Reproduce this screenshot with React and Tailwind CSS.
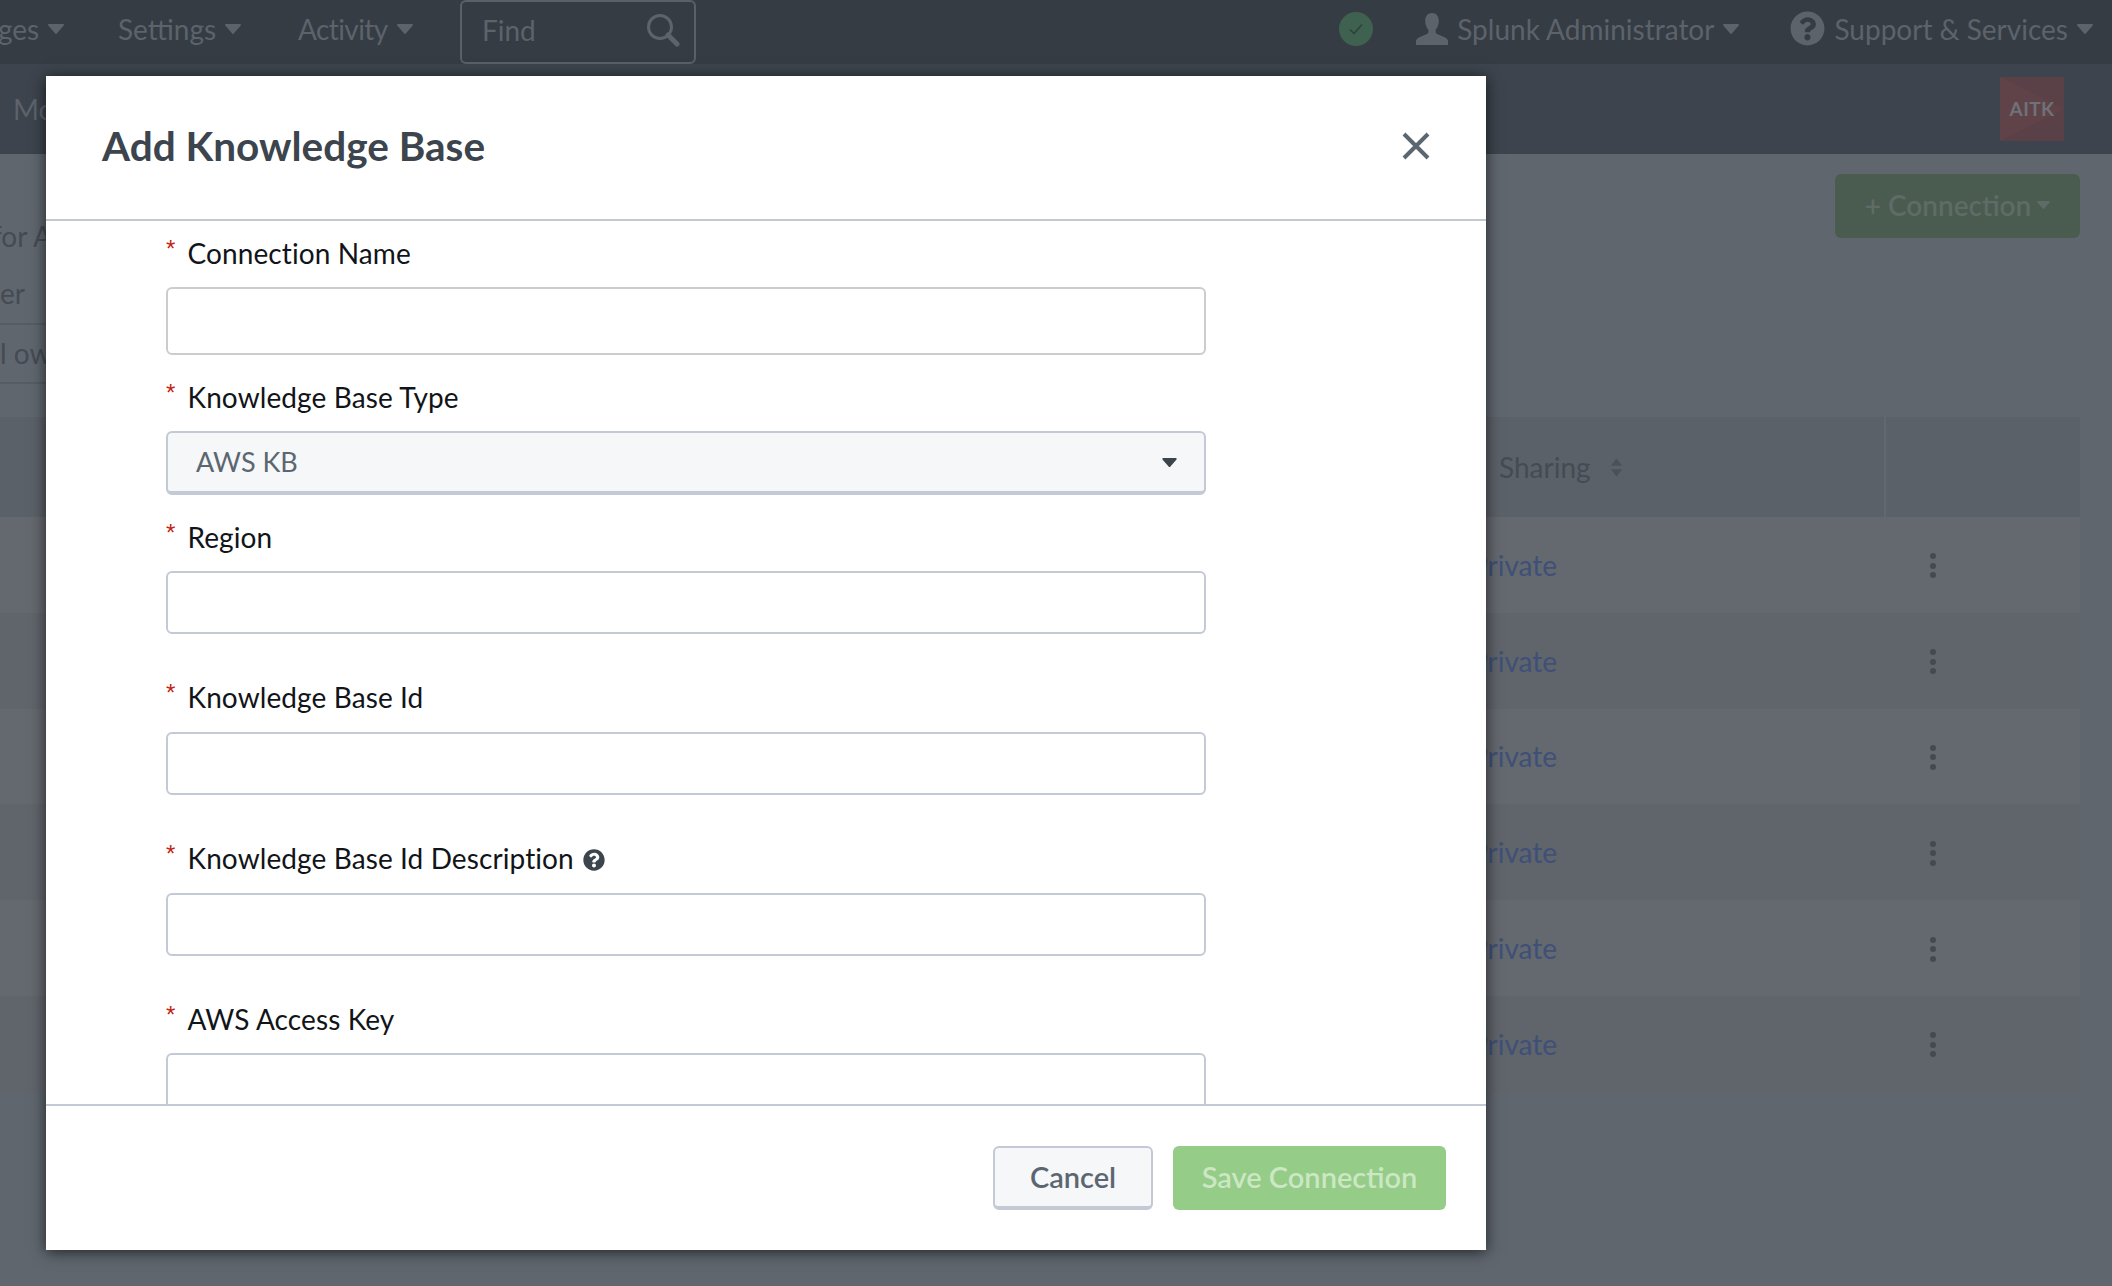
import { FaQuestionCircle } from 'react-icons/fa'

const rows = [0, 1, 2, 3, 4, 5]

function Caret({ className }) {
  return (
    <svg viewBox="0 0 16 10" className={className} fill="currentColor">
      <path d="M1 0h14a1 1 0 0 1 .8 1.6l-7 8a1 1 0 0 1-1.6 0l-7-8A1 1 0 0 1 1 0z" />
    </svg>
  )
}

function NavItem({ label, className }) {
  return (
    <div className={`flex items-center gap-[9px] ${className}`}>
      <span>{label}</span>
      <Caret className="w-[16px] h-[10px] text-[#5c636b]" />
    </div>
  )
}

function Field({ label, className, children, help }) {
  return (
    <div className={className}>
      <div className="flex items-center h-[40px] text-[28px] tracking-[0.1px] text-[#111418]">
        <span className="w-[21.5px] h-[40px] font-['Liberation_Sans'] text-[24px] leading-[32px] text-[#c41f14]">*</span>
        <span>{label}</span>
        {help && <FaQuestionCircle className="w-[22px] h-[22px] ml-[9px] mt-[4px] text-[#3c444d]" />}
      </div>
      {children}
    </div>
  )
}

function TextInput({ className }) {
  return <div className={`w-[1040px] bg-white border-2 border-[#c3cad5] rounded-[6px] ${className}`} />
}

export default function App() {
  return (
    <div className="relative w-[2112px] h-[1286px] overflow-hidden bg-[#5f666e] font-['Lato','Liberation_Sans',sans-serif]">
      {/* Top nav */}
      <div className="flex items-center h-[64px] bg-[#363c44] text-[28px] text-[#5c636b]">
        <NavItem label="ges" className="ml-[-2px] w-[120px] pb-[7px]" />
        <NavItem label="Settings" className="w-[180px] pb-[7px]" />
        <NavItem label="Activity" className="w-[162px] pb-[7px] tracking-[-0.6px]" />
        <div className="flex items-center justify-between w-[236px] h-[64px] pl-[20px] pr-[14px] pb-[4px] border-2 border-[#5a6068] rounded-[6px]">
          <span className="text-[#5c636b]">Find</span>
          <svg viewBox="0 0 34 34" className="w-[34px] h-[34px]" fill="none" stroke="#5c636b">
            <circle cx="14" cy="14" r="11.5" strokeWidth="3" />
            <path d="M22 22l9 9" strokeWidth="5" strokeLinecap="round" />
          </svg>
        </div>
        <div className="ml-auto flex items-center pr-[19px] pb-[7px]">
          <div className="flex items-center justify-center w-[34px] h-[34px] rounded-full bg-[#3f6250]">
            <svg viewBox="0 0 20 20" className="w-[20px] h-[20px]" fill="none" stroke="#2f4238" strokeWidth="1.6">
              <path d="M4 10.5l4 4 8-9" />
            </svg>
          </div>
          <svg viewBox="0 0 32 32" className="w-[32px] h-[32px] ml-[43px] mr-[9px]" fill="#5c636b">
            <path d="M16 0c4.4 0 6.8 3.4 6.8 8 0 3.6-1.4 7-3.2 8.8v2.2c0 1 .6 1.6 2 2.2l7 3c2 1 3.4 2 3.4 4V32H0v-3.8c0-2 1.400-3 3.400-4l7-3c1.400-.6 2-1.200 2-2.200v-2.200C10.600 15 9.200 11.600 9.200 8 9.200 3.400 11.600 0 16 0z" />
          </svg>
          <NavItem label="Splunk Administrator" />
          <FaQuestionCircle className="w-[35px] h-[35px] ml-[51px] mr-[9px] text-[#5c636b]" />
          <NavItem label="Support &amp; Services" />
        </div>
      </div>

      {/* App bar */}
      <div className="flex items-center justify-between h-[90px] pl-[13px] pr-[48px] bg-[#3d444d] text-[28px] text-[#5c636b]">
        <span>Mod</span>
        <div className="relative flex items-center justify-center w-[64px] h-[64px] bg-[#5a4147] overflow-hidden">
          <svg viewBox="0 0 64 64" className="absolute inset-0 w-full h-full">
            <path d="M0 0l64 32L0 64z" fill="#5f4349" />
          </svg>
          <span className="relative text-[19px] font-bold tracking-[0.4px] text-[#6f7278]">AITK</span>
        </div>
      </div>

      {/* Page heading */}
      <div className="flex justify-between h-[263px] pr-[32px]">
        <div className="w-[60px] pt-[62px] text-[28px] leading-[40px] text-[#454b54] whitespace-nowrap overflow-hidden">
          <div className="ml-[-8px]">for A</div>
          <div className="mt-[17px] pb-[10px] border-b-2 border-[#565c64]">er</div>
          <div className="pt-[8px] pb-[9px] border-b-2 border-[#565c64]">l ow</div>
        </div>
        <div className="flex items-center justify-center gap-[6px] w-[245px] h-[64px] mt-[20px] pb-[3px] rounded-[6px] bg-[#4a5c50] text-[28px] font-semibold text-[#5f6b66]">
          <span>+ Connection</span>
          <Caret className="w-[13px] h-[8px] text-[#5f6b66]" />
        </div>
      </div>

      {/* Table */}
      <div className="w-[2080px]">
        <div className="flex h-[100px] bg-[#5b6168] text-[28px] text-[#454b54]">
          <div className="flex items-center gap-[19px] w-[1886px] pl-[1499px] border-r-2 border-[#62686e]">
            <span>Sharing</span>
            <svg viewBox="0 0 14 20" className="w-[13px] h-[19px]" fill="#4b515a">
              <path d="M7 0l6 8H1zM7 20l-6-8h12z" />
            </svg>
          </div>
        </div>
        {rows.map((row) => (
          <div
            key={row}
            className={`flex items-center h-[95.8px] pl-[1471px] text-[28px] text-[#3f5078] ${row % 2 === 0 ? 'bg-[#64686f]' : 'bg-[#60646b]'}`}
          >
            <span>Private</span>
            <div className="flex flex-col gap-[3.500px] ml-[373px] mt-[2px]">
              <span className="w-[6px] h-[6px] rounded-full bg-[#454a52]" />
              <span className="w-[6px] h-[6px] rounded-full bg-[#454a52]" />
              <span className="w-[6px] h-[6px] rounded-full bg-[#454a52]" />
            </div>
          </div>
        ))}
      </div>

      {/* Modal */}
      <div className="absolute left-[46px] top-[76px] flex flex-col w-[1440px] h-[1174px] bg-white shadow-[0_2px_14px_rgba(0,0,0,0.65)]">
        <div className="flex items-center justify-between shrink-0 h-[145px] pl-[56px] pr-[56px] pb-[3px] border-b-2 border-[#c3c9d4]">
          <h1 className="text-[40.5px] font-bold text-[#3c444d]">Add Knowledge Base</h1>
          <svg viewBox="0 0 28 28" className="w-[28px] h-[28px]" fill="none" stroke="#5c6670" strokeWidth="4">
            <path d="M2 2l24 24M26 2L2 26" />
          </svg>
        </div>

        <div className="flex-1 min-h-0 overflow-hidden pl-[120px]">
          <Field label="Connection Name" className="mt-[12px]">
            <TextInput className="h-[68px] mt-[14px] border-[#cccccc]" />
          </Field>
          <Field label="Knowledge Base Type" className="mt-[22px]">
            <div className="flex items-center justify-between w-[1040px] h-[64px] mt-[14px] pl-[28px] pr-[27px] bg-[#f5f7f9] border-2 border-b-4 border-[#c3cad5] rounded-[6px] text-[27px] text-[#5c6670]">
              <span>AWS KB</span>
              <Caret className="w-[15px] h-[9px] text-[#3c444d]" />
            </div>
          </Field>
          <Field label="Region" className="mt-[22px]">
            <TextInput className="h-[63px] mt-[14px]" />
          </Field>
          <Field label="Knowledge Base Id" className="mt-[43px]">
            <TextInput className="h-[63px] mt-[15px]" />
          </Field>
          <Field label="Knowledge Base Id Description" help className="mt-[43px]">
            <TextInput className="h-[63px] mt-[15px]" />
          </Field>
          <Field label="AWS Access Key" className="mt-[43px]">
            <TextInput className="h-[63px] mt-[14px]" />
          </Field>
        </div>

        <div className="flex items-center justify-end gap-[20px] shrink-0 h-[146px] pr-[40px] border-t-2 border-[#c3c9d4]">
          <button className="w-[160px] h-[64px] pb-[1px] bg-[#f5f7f9] border-2 border-b-4 border-[#c3cad5] rounded-[6px] text-[29px] font-semibold text-[#5c6670]">
            Cancel
          </button>
          <button className="w-[273px] h-[64px] pb-[2px] bg-[#95cc87] rounded-[6px] text-[29px] font-semibold text-[#cbe7c4]">
            Save Connection
          </button>
        </div>
      </div>
    </div>
  )
}
